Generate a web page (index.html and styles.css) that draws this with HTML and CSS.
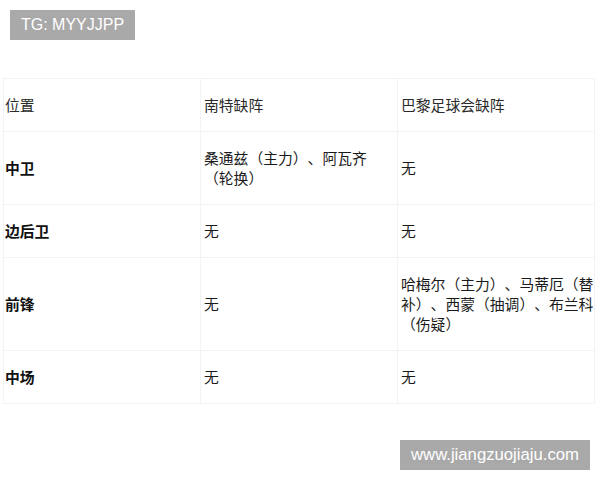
FILE: index.html
```html
<!DOCTYPE html>
<html lang="zh-CN">
<head>
<meta charset="utf-8">
<title>缺阵</title>
<link rel="stylesheet" href="styles.css">
</head>
<body>
<div class="top">
  <span class="tag">TG: MYYJJPP</span>
</div>
<table class="grid">
  <colgroup>
    <col class="c1">
    <col class="c2">
    <col class="c3">
  </colgroup>
  <tr class="head">
    <td>位置</td>
    <td>南特缺阵</td>
    <td>巴黎足球会缺阵</td>
  </tr>
  <tr>
    <td class="pos">中卫</td>
    <td>桑通兹（主力）、阿瓦齐（轮换）</td>
    <td>无</td>
  </tr>
  <tr>
    <td class="pos">边后卫</td>
    <td>无</td>
    <td>无</td>
  </tr>
  <tr>
    <td class="pos">前锋</td>
    <td>无</td>
    <td>哈梅尔（主力）、马蒂厄（替补）、西蒙（抽调）、布兰科（伤疑）</td>
  </tr>
  <tr>
    <td class="pos">中场</td>
    <td>无</td>
    <td>无</td>
  </tr>
</table>
<div class="bottom">
  <span class="mark">www.jiangzuojiaju.com</span>
</div>
</body>
</html>
```
FILE: styles.css
```css
html, body {
  margin: 0;
  padding: 0;
  background: #ffffff;
}
body {
  font-family: "Noto Sans CJK SC", "Liberation Sans", sans-serif;
  color: #1a1a1a;
}
.top {
  padding: 10px 10px 0 10px;
  height: 30px;
}
.tag {
  display: inline-block;
  width: 125px;
  height: 30px;
  line-height: 30px;
  background: #a9a9a9;
  color: #ffffff;
  font-family: "Liberation Sans", sans-serif;
  font-size: 16px;
  text-align: center;
}
.grid {
  margin: 38px 0 0 3px;
  width: 591px;
  border-collapse: collapse;
  table-layout: fixed;
  font-size: 14.8px;
  line-height: 20px;
  text-spacing-trim: space-all;
}
.grid .c1 { width: 197px; }
.grid .c2 { width: 197px; }
.grid .c3 { width: 197px; }
.grid td {
  padding: 16px 3px 16px 3px;
  border: 1px solid #f3f3f3;
  vertical-align: middle;
  text-spacing-trim: space-all;
}
.grid td:first-child {
  padding-left: 1px;
}
.grid td:last-child {
  padding-right: 0;
}
.grid .head td {
  color: #2a2a2a;
}
.grid td.pos {
  font-weight: bold;
  color: #111111;
}
.bottom {
  display: flex;
  justify-content: flex-end;
  padding-right: 10px;
  margin-top: 36px;
}
.mark {
  display: inline-block;
  width: 190px;
  height: 30px;
  line-height: 30px;
  background: #a9a9a9;
  color: #ffffff;
  font-family: "Liberation Sans", sans-serif;
  font-size: 16.7px;
  text-align: center;
}
```
